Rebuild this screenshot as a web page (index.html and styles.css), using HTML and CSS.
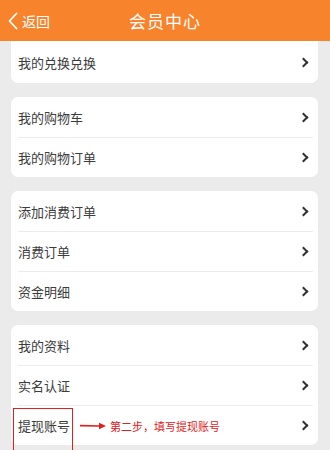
FILE: index.html
```html
<!DOCTYPE html>
<html lang="zh">

<head>
    <meta charset="UTF-8" />
    <meta name="viewport" content="width=device-width, initial-scale=1.0" />
    <title>会员中心</title>

    <link rel="stylesheet" href="styles.css">
</head>

<body>
    <header class="topbar">
        <a class="back" href="">
            <svg width="10" height="18" viewBox="0 0 10 18"><path d="M8.5 1.5 L1.5 9 L8.5 16.5" fill="none" stroke="#fff" stroke-width="1.8" stroke-linecap="round" stroke-linejoin="round"/></svg>
            <span>返回</span>
        </a>
        <h1>会员中心</h1>
    </header>

    <main>
        <ul class="card card-first">
            <li><span>我的兑换兑换</span><i class="arrow"></i></li>
        </ul>

        <ul class="card">
            <li><span>我的购物车</span><i class="arrow"></i></li>
            <li><span>我的购物订单</span><i class="arrow"></i></li>
        </ul>

        <ul class="card">
            <li><span>添加消费订单</span><i class="arrow"></i></li>
            <li><span>消费订单</span><i class="arrow"></i></li>
            <li><span>资金明细</span><i class="arrow"></i></li>
        </ul>

        <ul class="card">
            <li><span>我的资料</span><i class="arrow"></i></li>
            <li><span>实名认证</span><i class="arrow"></i></li>
            <li class="marked">
                <span class="boxed">提现账号</span>
                <span class="note">
                    <svg width="26" height="8" viewBox="0 0 26 8"><path d="M0 3.6 L20 4" stroke="#e02020" stroke-width="1.6"/><path d="M19 0.8 L26 4 L19 7.2 Z" fill="#e02020"/></svg>
                    第二步，填写提现账号
                </span>
                <i class="arrow"></i>
            </li>
        </ul>
    </main>
</body>

</html>
```

FILE: styles.css
```css
:root {
    --orange: #f7842c;
    --bg-gray: #ebebeb;
    --text: #3c3c3c;
    --line: #ececec;
    --red: #e02020;
}

body {
    margin: 0;
    background-color: var(--bg-gray);
    font-family: "Noto Sans CJK SC", "Noto Sans", sans-serif;
    height: 450px;
    overflow: hidden;
}

.topbar {
    position: relative;
    height: 41px;
    background-color: var(--orange);
    color: #fff;
    display: flex;
    align-items: center;
    justify-content: center;

    h1 {
        margin: 0;
        font-size: 17px;
        font-weight: 400;
        letter-spacing: 1px;
    }
}

.back {
    position: absolute;
    left: 8px;
    top: 0;
    height: 41px;
    display: flex;
    align-items: center;
    gap: 4px;
    color: #fff;
    text-decoration: none;
    font-size: 14px;
}

main {
    padding: 0 12px 0 11px;
}

.card {
    list-style: none;
    margin: 14px 0 0;
    padding: 0 5px 0 7px;
    background-color: #fff;
    border-radius: 7px;

    li {
        position: relative;
        box-sizing: border-box;
        height: 40px;
        display: flex;
        align-items: center;
        font-size: 13px;
        color: var(--text);
        border-top: 1px solid var(--line);
    }

    li:first-child {
        border-top: none;
    }
}

.card-first {
    margin-top: 0;
    border-radius: 0 0 7px 7px;

    li {
        height: 42px;
    }
}

.arrow {
    margin-left: auto;
    margin-right: 6px;
    width: 5px;
    height: 5px;
    border-top: 2px solid #333;
    border-right: 2px solid #333;
    transform: rotate(45deg);
}

.marked .boxed {
    position: relative;
}

.marked .boxed::before {
    content: "";
    position: absolute;
    left: -5px;
    top: -8px;
    width: 58px;
    height: 46px;
    border: 1.5px solid var(--red);
}

.note {
    margin-left: 10px;
    display: flex;
    align-items: center;
    gap: 4px;
    color: var(--red);
    font-size: 11px;
}
```
